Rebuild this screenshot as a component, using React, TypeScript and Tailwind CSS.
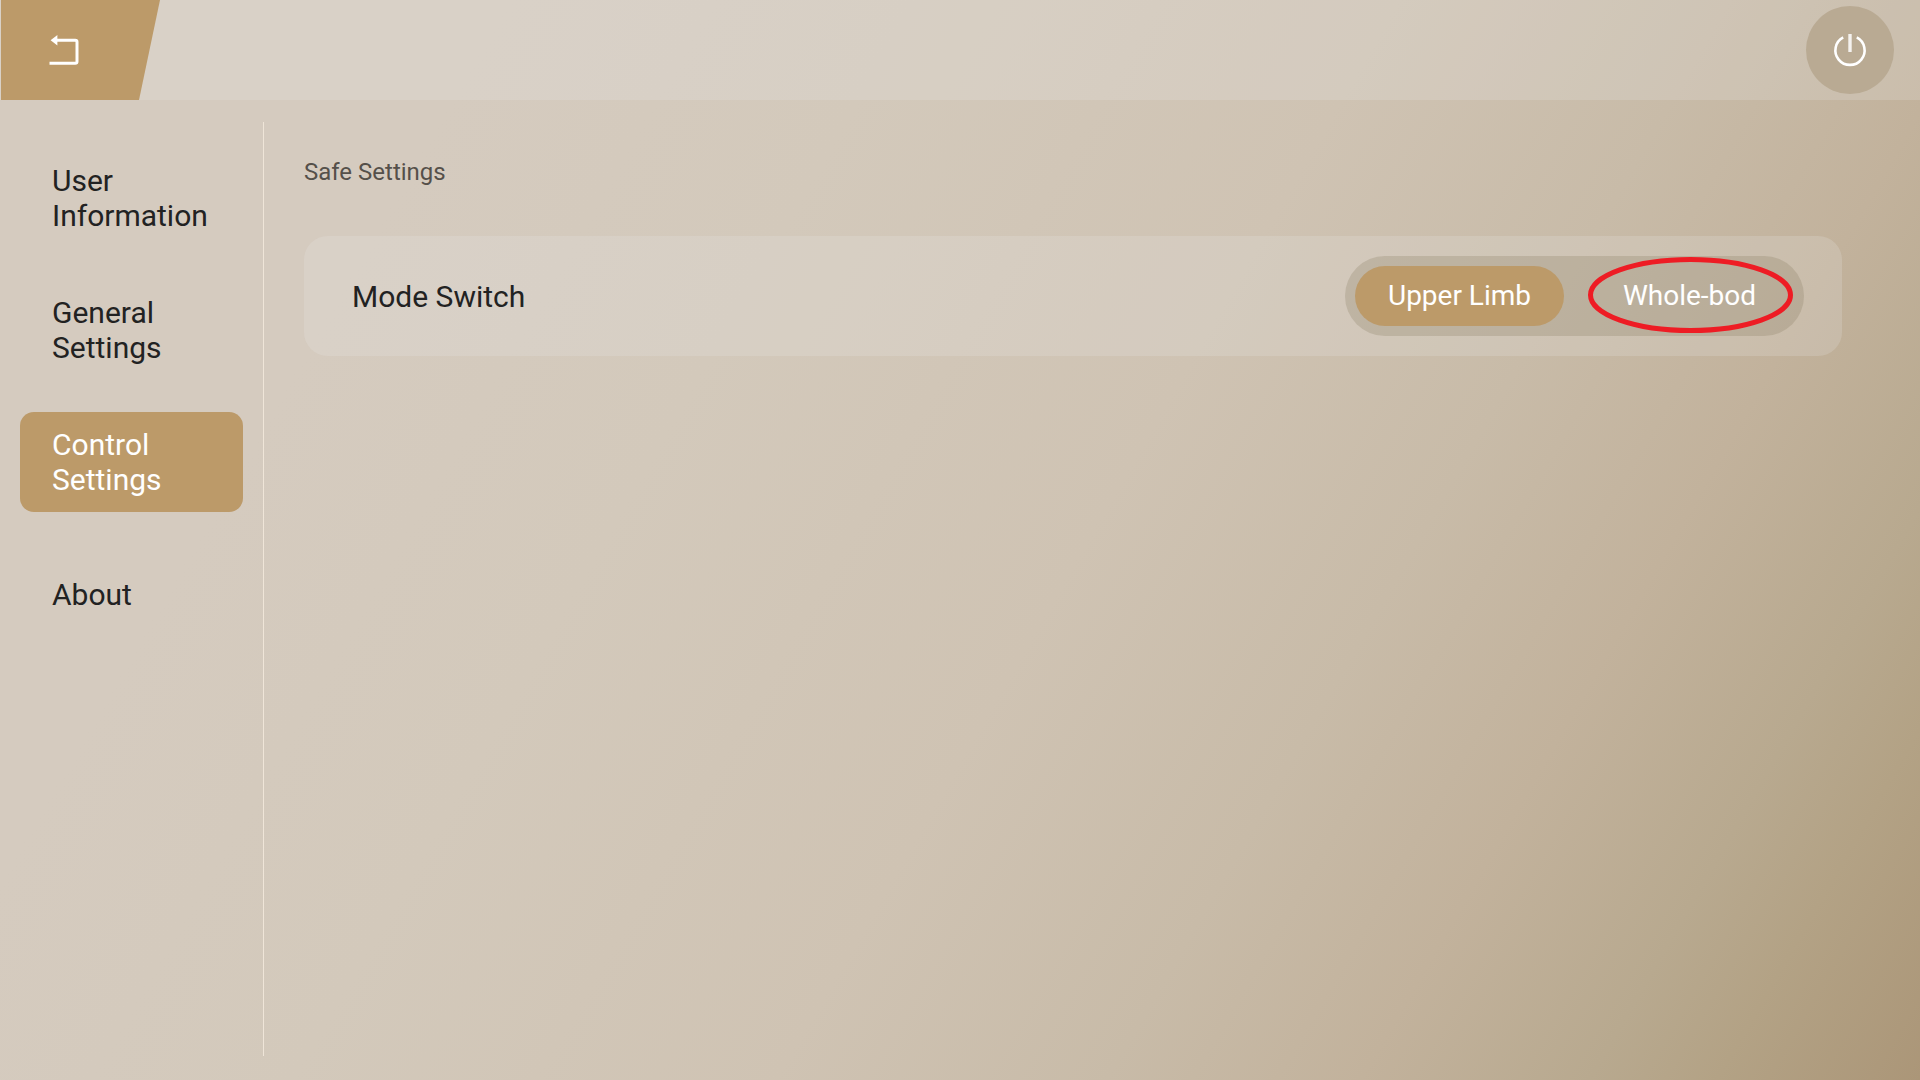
import { useState } from "react";
import clsx from "clsx";

const sections = ["User Information", "General Settings", "Control Settings", "About"];
const modes = ["Upper Limb", "Whole-bod"];

const Header = () => (
  <header className="flex h-[100px] items-center justify-between bg-[#eaeaea]/20 pl-px pr-[26px]">
    <button
      type="button"
      aria-label="Back"
      className="h-[100px] w-[159px] cursor-pointer bg-[#bc9a69] pl-12 [clip-path:polygon(0_0,100%_0,138px_100%,0_100%)]"
    >
      <svg width="32" height="32" viewBox="0 0 32 32" fill="none">
        <path
          d="M7 6.2H26.2Q28 6.2 28 8V27.4Q28 29.2 26.2 29.2H0.5"
          stroke="white"
          strokeWidth="3"
        />
        <path d="M1.6 6.2L8.4 1V11.4Z" fill="white" />
      </svg>
    </button>
    <button
      type="button"
      aria-label="Power"
      className="flex size-[88px] cursor-pointer items-center justify-center rounded-full bg-[#b9aa93]"
    >
      <svg width="36" height="36" viewBox="0 0 36 36" fill="none" stroke="white">
        <path d="M11.2 5.4A14.6 14.6 0 1 0 24.8 5.4" strokeWidth="2.6" />
        <path d="M18 2V20" strokeWidth="3.4" strokeOpacity="0.85" />
      </svg>
    </button>
  </header>
);

const App = () => {
  const [section, setSection] = useState("Control Settings");
  const [mode, setMode] = useState("Upper Limb");

  return (
    <div className="flex min-h-screen flex-col bg-[linear-gradient(120deg,#d5cbbf_0%,#d5cbbf_20%,#d3c9bb_36%,#cfc3b3_55%,#c8bba8_68%,#c2b29c_78%,#b8a98f_87%,#b3a285_92%,#ab9678_100%)] font-[Roboto,sans-serif] text-[#222]">
      <Header />
      <div className="flex flex-1 pt-[22px] pb-6">
        <nav className="flex w-[264px] shrink-0 flex-col gap-8 border-r border-[#efe5d8] px-5 pt-[26px]">
          {sections.map((name) => (
            <a
              key={name}
              href="#"
              onClick={() => setSection(name)}
              className={clsx(
                "flex h-[100px] items-center rounded-[14px] px-8 text-[30px] leading-[35px]",
                name === section && "bg-[#bc9a69] text-white"
              )}
            >
              {name}
            </a>
          ))}
        </nav>
        <main className="flex-1 pt-8 pr-[78px] pl-10">
          <h1 className="text-2xl leading-9 text-[#55504a]">Safe Settings</h1>
          <section className="mt-[46px] flex h-[120px] items-center justify-between rounded-3xl bg-[#eaeaea]/20 pr-[38px] pl-12">
            <h2 className="text-[30px] leading-[35px]">Mode Switch</h2>
            <div className="relative flex gap-[21px] rounded-full bg-[#85775d]/25 p-[10px]">
              {modes.map((name) => (
                <button
                  key={name}
                  type="button"
                  aria-pressed={name === mode}
                  onClick={() => setMode(name)}
                  className={clsx(
                    "h-[60px] w-[209px] cursor-pointer rounded-full text-[28px] leading-9 text-white",
                    name === mode && "bg-[#bc9a69]"
                  )}
                >
                  {name}
                </button>
              ))}
              {/* marker around the whole-body option */}
              <svg
                className="pointer-events-none absolute top-0 right-[10px]"
                width="208"
                height="78"
                viewBox="0 0 208 78"
                fill="none"
              >
                <ellipse cx="104.5" cy="39" rx="100" ry="35.5" stroke="#ee1c24" strokeWidth="5" />
              </svg>
            </div>
          </section>
        </main>
      </div>
    </div>
  );
};

export default App;
